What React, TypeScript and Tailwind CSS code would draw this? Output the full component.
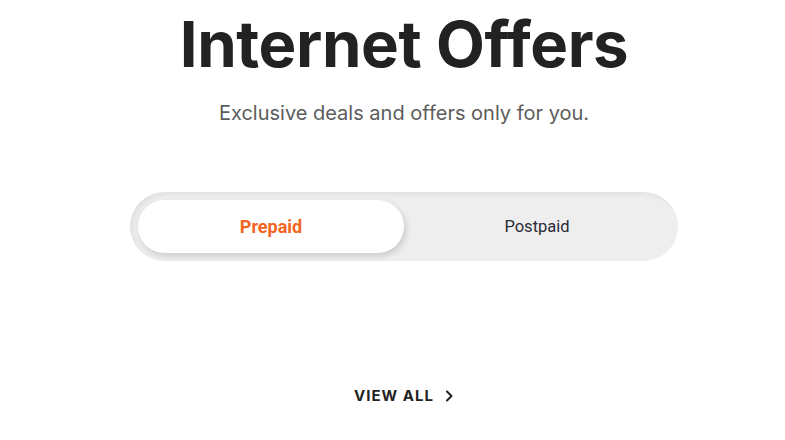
import React from "react";

export default function App() {
  return (
    <div className="w-[785px] h-[440px] bg-white overflow-hidden flex flex-col items-center pl-[23px]" style={{ fontFamily: "Inter, 'Noto Sans', sans-serif" }}>
      <h1 className="mt-[4px] text-[63.5px] leading-[80px] font-bold text-[#222222] tracking-[-0.4px]">Internet Offers</h1>
      <p className="mt-[15px] text-[20px] leading-[28px] text-[#5c5c5c]">Exclusive deals and offers only for you.</p>
      <div className="mt-[65px] w-[548px] h-[69px] rounded-full bg-[#eeeeee] p-[8px] flex shadow-[inset_3px_3px_4px_rgba(0,0,0,0.05)]" style={{ fontFamily: "Roboto, Inter, sans-serif" }}>
        <button className="flex-1 rounded-full bg-white shadow-[2px_3px_6px_rgba(0,0,0,0.15)] text-[18px] font-bold text-[#f26522]">Prepaid</button>
        <button className="flex-1 rounded-full pt-[1px] text-[16.5px] text-[#2a2b38]">Postpaid</button>
      </div>
      <div className="mt-[124px] flex items-center gap-[10px] text-[15px] font-bold tracking-[1px] text-[#222222]">
        <span>VIEW ALL</span>
        <svg width="10" height="12" viewBox="0 0 10 12" fill="none" stroke="#222" strokeWidth="2" strokeLinecap="round" strokeLinejoin="round"><path d="M3 1.5 L7.5 6 L3 10.5" /></svg>
      </div>
    </div>
  );
}
